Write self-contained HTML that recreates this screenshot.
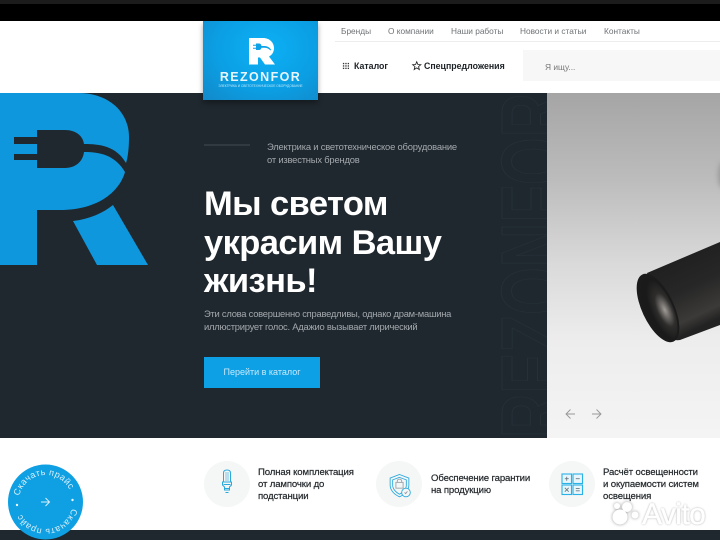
<!DOCTYPE html>
<html lang="ru"><head><meta charset="utf-8"><title>Rezonfor</title>
<style>
*{margin:0;padding:0;box-sizing:border-box}
html,body{width:720px;height:540px;overflow:hidden;background:#fff;font-family:"Liberation Sans","DejaVu Sans",sans-serif}
.a{position:absolute;white-space:nowrap}
#p{position:relative;width:720px;height:540px;overflow:hidden;background:#fff}
.n{top:25px;font-size:8.3px;color:#6f7376;line-height:12px}
.f{font-size:9.6px;letter-spacing:-.14px;line-height:12px;color:#23282c;font-weight:400;-webkit-text-stroke:.2px #23282c}
.h{font-size:9.4px;letter-spacing:-.24px;line-height:13.6px;color:#a4a9ad}
.c{border-radius:50%;background:#f5f6f6;width:46px;height:46px;top:461px}
svg{position:absolute;overflow:visible}
</style></head><body><div id="p">
<div class="a" style="left:0;top:0;width:720px;height:21px;background:#000"></div>
<div class="a" style="left:0;top:0;width:720px;height:4px;background:#1c1c1c"></div>
<div class="a" style="left:0;top:93px;width:720px;height:345px;background:#1f282f"></div>
<div class="a" style="left:547px;top:93px;width:173px;height:345px;background:linear-gradient(180deg,#a5a5a5 0%,#bcbcbc 25%,#dadada 50%,#ededed 72%,#f4f4f4 100%)"></div>

<svg style="left:0;top:0" width="720" height="540" viewBox="0 0 720 540">
<defs><radialGradient id="g" cx=".68" cy=".55" r=".5"><stop offset="0" stop-color="#a09b96"/><stop offset=".25" stop-color="#6b6865"/><stop offset=".55" stop-color="#2e2d2c"/><stop offset="1" stop-color="#1a1a1a"/></radialGradient>
<linearGradient id="t" x1="0" y1="0" x2=".35" y2="1"><stop offset="0" stop-color="#1a1a1b"/><stop offset=".6" stop-color="#272727"/><stop offset=".88" stop-color="#3c3a38"/><stop offset="1" stop-color="#222"/></linearGradient>
<clipPath id="cw"><rect x="490" y="93" width="57" height="345"/></clipPath>
<clipPath id="cr"><rect x="547" y="93" width="173" height="345"/></clipPath></defs>
<!-- big R -->
<path fill="#0f97dd" d="M0 93H78C110 93 129 113 129 137C129 148 128 157 126 163C116 146 100 144 84 144C83 136 76 130 65 130H37V137H14V144H37V154H14V160H37V168H65C76 168 83 161 84 152C100 152 115 155 125 172C120 190 100 210 60 210H37V265H0Z"/>
<path fill="#0f97dd" d="M73 221C90 219 103 213 113 205L148 265H97Z"/>
<!-- watermark -->
<g clip-path="url(#cw)"><text transform="translate(564,438) rotate(-90)" font-family="Liberation Sans" font-weight="700" font-size="90" textLength="345" lengthAdjust="spacingAndGlyphs" stroke="#263037" stroke-width="1" fill="none">REZONFOR</text></g>
<!-- lamp -->
<g clip-path="url(#cr)"><ellipse cx="724" cy="175" rx="6" ry="14" fill="#9a9a9a" style="filter:blur(2.500px)"/></g>
<path fill="url(#t)" d="M647 273L720 242V325L680 340Q668 342 660 325Z"/>
<ellipse cx="658" cy="308" rx="16" ry="37" transform="rotate(-25 658 308)" fill="#1b1b1b"/>
<ellipse cx="659" cy="309" rx="13.500" ry="33" transform="rotate(-25 659 309)" fill="url(#g)"/>
<!-- arrows -->
<g fill="none" stroke="#989898" stroke-width=".9"><path d="M575 414H566M570.500 409.500L566 414L570.500 418.500"/><path d="M592 414H601M596.500 409.500L601 414L596.500 418.500"/></g>
<line x1="204" y1="145" x2="250" y2="145" stroke="#424b52"/>
</svg>

<!-- header -->
<div class="a n" style="left:341px">Бренды</div>
<div class="a n" style="left:388px">О компании</div>
<div class="a n" style="left:451px">Наши работы</div>
<div class="a n" style="left:520px">Новости и статьи</div>
<div class="a n" style="left:604px">Контакты</div>
<div class="a" style="left:335px;top:41px;width:385px;height:1px;background:#eceded"></div>
<div class="a" style="left:523px;top:50px;width:197px;height:31px;background:#f7f7f7"></div>
<div class="a" style="left:545px;top:60.500px;font-size:8.400px;line-height:12px;color:#777">Я ищу...</div>
<div class="a" style="left:354px;top:59.500px;font-size:8.800px;line-height:13px;font-weight:700;color:#1d2226">Каталог</div>
<div class="a" style="left:424px;top:59.500px;font-size:8.800px;line-height:13px;font-weight:700;color:#1d2226">Спецпредложения</div>
<svg style="left:342px;top:61.500px" width="8" height="8" viewBox="0 0 9 9"><g fill="#333"><rect x="1" y="1" width="1.500" height="1.500"/><rect x="3.700" y="1" width="1.500" height="1.500"/><rect x="6.400" y="1" width="1.500" height="1.500"/><rect x="1" y="3.700" width="1.500" height="1.500"/><rect x="3.700" y="3.700" width="1.500" height="1.500"/><rect x="6.400" y="3.700" width="1.500" height="1.500"/><rect x="1" y="6.400" width="1.500" height="1.500"/><rect x="3.700" y="6.400" width="1.500" height="1.500"/><rect x="6.400" y="6.400" width="1.500" height="1.500"/></g></svg>
<svg style="left:411.500px;top:60.500px" width="9.500" height="9.500" viewBox="0 0 10 10"><path d="M5 .8L6.200 3.700L9.300 3.900L6.900 5.900L7.700 9L5 7.300L2.300 9L3.100 5.900L.7 3.900L3.800 3.700Z" fill="none" stroke="#222" stroke-width=".9"/></svg>

<!-- logo -->
<div class="a" style="left:203px;top:21px;width:115px;height:79px;background:radial-gradient(ellipse at 55% 35%,#0cb0f5 0%,#0b9fe4 55%,#1289c9 100%);box-shadow:0 3px 5px rgba(0,0,0,.35)"></div>
<svg style="left:203px;top:21px" width="115" height="79" viewBox="0 0 115 79">
<path fill="#fff" d="M46 17H60C67 17 71 22 71 27C71 31 69 34 66 35.500L72 43.500H62L57 36.500H55V43.500H46Z"/>
<path fill="#0ca2e8" d="M50 23.800H53V22.500H56Q58 22.500 58.500 25H62Q66 25.500 68 28.500L67.500 29.500Q65 27 62 26.800H58.500Q58 29 56 29H53V27.700H50V26.700H53V24.800H50Z"/>
</svg>
<div class="a" style="left:203px;top:70px;width:115px;text-align:center;font-size:12.500px;line-height:14px;font-weight:700;letter-spacing:1.400px;color:#e9f6fd">REZONFOR</div>
<div class="a" style="left:203px;top:83.500px;width:115px;text-align:center;font-size:3.180px;line-height:5px;color:#bfe7fa">ЭЛЕКТРИКА И СВЕТОТЕХНИЧЕСКОЕ ОБОРУДОВАНИЕ</div>

<!-- hero text -->
<div class="a h" style="left:267px;top:139.500px;letter-spacing:-.19px">Электрика и светотехническое оборудование<br>от известных брендов</div>
<div class="a" style="left:204px;top:185px;font-size:34.500px;letter-spacing:-.58px;line-height:38.500px;font-weight:700;color:#fff">Мы светом<br>украсим Вашу<br>жизнь!</div>
<div class="a h" style="left:204px;top:306.500px">Эти слова совершенно справедливы, однако драм-машина<br>иллюстрирует голос. Адажио вызывает лирический</div>
<div class="a" style="left:204px;top:357px;width:116px;height:31px;background:#0ea0e5;color:#c8e9f9;font-size:9px;line-height:31px;text-align:center">Перейти в каталог</div>

<!-- features -->
<div class="a" style="left:0;top:530px;width:720px;height:10px;background:#1f282f"></div>
<div class="a c" style="left:204px"></div>
<div class="a c" style="left:376px"></div>
<div class="a c" style="left:549px"></div>
<svg style="left:204px;top:461px" width="46" height="46" viewBox="0 0 46 46"><g fill="none" stroke="#29a9dc" stroke-width="1"><path d="M19.500 21V12Q19.500 9 23 9Q26.500 9 26.500 12V21Z"/><path d="M22 11V20M24 11V20" stroke-width=".6"/><path d="M18.500 21H27.500V24L25.500 26V29H20.500V26L18.500 24Z"/><path d="M19.500 23.500H26.500M21 27.500H25"/><path d="M21.500 31.500H24.500"/></g></svg>
<svg style="left:376px;top:461px" width="46" height="46" viewBox="0 0 46 46"><g transform="translate(23.500 25) scale(.72) translate(-23 -23)"><g fill="none" stroke="#29a9dc" stroke-width="1.200"><path d="M23 7L36 12V22C36 29 30 35 23 38C16 35 10 29 10 22V12Z"/><path d="M23 11L32.500 14.500V22C32.500 27 28 32 23 34.500C18 32 13.500 27 13.500 22V14.500Z"/></g><g fill="none" stroke="#9aa7ad" stroke-width="1.300"><rect x="18" y="18" width="10" height="8"/><path d="M20 18V16Q20 13.500 23 13.500Q26 13.500 26 16V18"/></g><circle cx="32" cy="32" r="6" fill="#f5f6f6" stroke="#29a9dc" stroke-width="1.200"/><path d="M30 32L31.500 33.500L34 30.500" fill="none" stroke="#8a979d" stroke-width="1.200"/></g></svg>
<svg style="left:549px;top:461px" width="46" height="46" viewBox="0 0 46 46"><g fill="#e8f6fc" stroke="#29b2e6" stroke-width="1.100"><rect x="13" y="13" width="9.500" height="9.500"/><rect x="24" y="13" width="9.500" height="9.500"/><rect x="13" y="24" width="9.500" height="9.500"/><rect x="24" y="24" width="9.500" height="9.500"/></g><g fill="none" stroke="#6b7a82" stroke-width=".9"><path d="M15.800 17.700H19.700M17.700 15.800V19.700M26.800 17.700H30.700M15.800 26.800L19.700 30.700M19.700 26.800L15.800 30.700M26.800 27.600H30.700M26.800 29.800H30.700"/></g></svg>
<div class="a f" style="left:258px;top:466.500px">Полная комплектация<br>от лампочки до<br>подстанции</div>
<div class="a f" style="left:431px;top:472.500px">Обеспечение гарантии<br>на продукцию</div>
<div class="a f" style="left:603px;top:466.500px">Расчёт освещенности<br>и окупаемости систем<br>освещения</div>

<!-- round badge -->
<svg style="left:0;top:460px" width="90" height="80" viewBox="0 0 90 80">
<defs><path id="r1" d="M18.500 42A27 27 0 1 1 72.500 42A27 27 0 1 1 18.500 42"/></defs>
<circle cx="45.500" cy="42" r="37.500" fill="#0fa0e3"/>
<text font-family="Liberation Sans" font-size="9" fill="#d7f0fb" letter-spacing=".4"><textPath href="#r1" startOffset="6">Скачать прайс</textPath></text>
<text font-family="Liberation Sans" font-size="9" fill="#d7f0fb" letter-spacing=".4"><textPath href="#r1" startOffset="90.800">Скачать прайс</textPath></text>
<circle cx="17" cy="45" r="1.200" fill="#e6f6fd"/><circle cx="72.500" cy="40" r="1.200" fill="#e6f6fd"/>
<path d="M41 42H49.500M45.500 38L49.500 42L45.500 46" fill="none" stroke="#d7f0fb" stroke-width="1"/>
</svg>

<!-- avito watermark -->
<svg style="left:612px;top:500px;filter:drop-shadow(0 0 1.500px rgba(0,0,0,.4))" width="30" height="30" viewBox="0 0 30 30"><g fill="#fff"><circle cx="8" cy="17" r="7.500"/><circle cx="15" cy="7" r="5"/><circle cx="23" cy="15" r="3.500"/><circle cx="5" cy="6" r="3"/></g></svg>
<div class="a" style="left:642px;top:497px;font-size:30px;line-height:36px;letter-spacing:-.6px;color:#fff;-webkit-text-stroke:.4px #fff;text-shadow:0 0 2px rgba(0,0,0,.4)">Avito</div>
</div></body></html>
